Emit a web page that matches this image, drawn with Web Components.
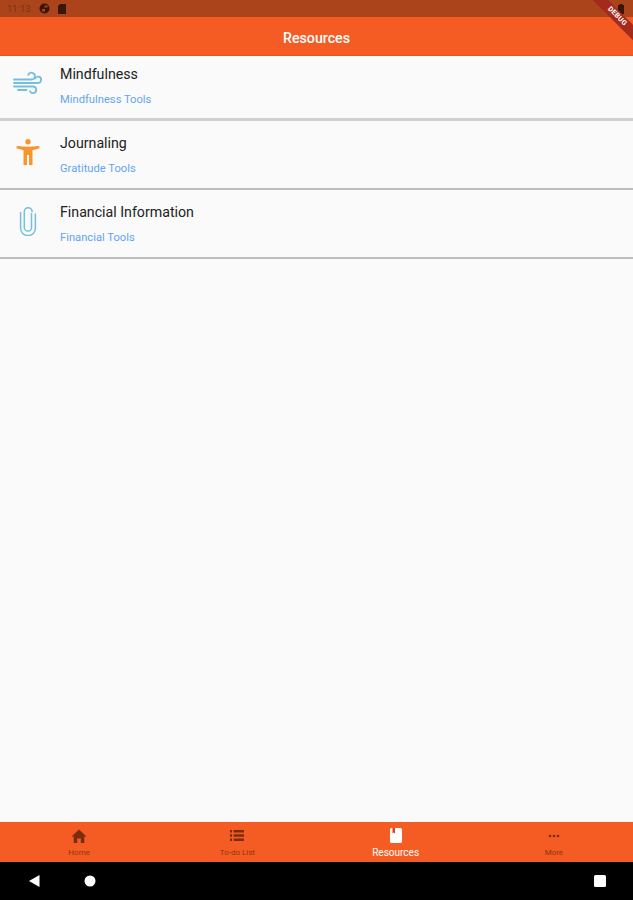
<!DOCTYPE html>
<html>
<head>
<meta charset="utf-8">
<title>Resources</title>
<style>
html, body { margin: 0; height: 100%; background: #fafafa; }
body { font-family: Roboto, "Liberation Sans", sans-serif; }
</style>
</head>
<body>
<app-shell>
	<status-bar slot="status"></status-bar>
	<app-bar slot="bar">Resources</app-bar>
	<resource-row icon="wind" title="Mindfulness" sub="Mindfulness Tools" line="3"></resource-row>
	<resource-row icon="person" title="Journaling" sub="Gratitude Tools" line="2"></resource-row>
	<resource-row icon="clip" title="Financial Information" sub="Financial Tools" line="2"></resource-row>
	<bottom-tabs slot="tabs"></bottom-tabs>
	<nav-keys slot="keys"></nav-keys>
</app-shell>

<script>
const icons = {
	wind: `<svg width="30" height="24" viewBox="0 0 30 24" fill="none" stroke="#74bfdc" stroke-width="1.8" stroke-linecap="round"><path d="M1 8.500h17.500a3.400 3.400 0 1 0-3.200-4.600"/><path d="M1 12h24a3.200 3.200 0 1 0-3-4.400"/><path d="M1 15.500h19a3.300 3.300 0 1 1-3 4.800"/><path d="M5 19h8.500"/></svg>`,
	person: `<svg width="26" height="28" viewBox="0 0 26 28" fill="#f7962d"><circle cx="13" cy="3.800" r="2.700"/><path d="M1.500 8.400 2.500 8.100Q13 9.400 23.500 8.100L24.500 8.400V10.200L17.500 12.200V27H14V17H12V27H8.500V12.200L1.500 10.200z"/></svg>`,
	clip: `<svg width="18" height="30" viewBox="0 0 18 30" fill="none" stroke="#74bfdc" stroke-width="1.500" stroke-linecap="round"><path d="M12.500 7.500v14a3.600 3.600 0 0 1-7.200 0V5.600a3.900 3.900 0 0 1 7.800 0"/><path d="M16.400 8v14.200a7.400 7.400 0 0 1-14.800 0V6.500"/></svg>`,
	home: `<svg width="16" height="14" viewBox="0 0 16 14" fill="#7a2c0d"><path d="M8 .5 15.500 7.400h-2.200V14H9.800V9.400H6.200V14H2.700V7.400H.5z"/></svg>`,
	list: `<svg width="14" height="11" viewBox="0 0 14 11" fill="#7a2c0d"><path d="M0 0h2v2.400H0zM3.600 0H14v2.400H3.600zM0 4.300h2v2.400H0zM3.600 4.300H14v2.400H3.600zM0 8.600h2V11H0zM3.600 8.600H14V11H3.600z"/></svg>`,
	book: `<svg width="12" height="15" viewBox="0 0 12 15"><path fill="#fff" d="M1.500 0h9A1.500 1.500 0 0 1 12 1.500v12a1.500 1.500 0 0 1-1.500 1.500h-9A1.500 1.500 0 0 1 0 13.500v-12A1.500 1.500 0 0 1 1.500 0z"/><path fill="#d8431f" d="M2.500 0h2.500v5.500l-1.250-1-1.250 1z"/></svg>`,
	more: `<svg width="12" height="4" viewBox="0 0 12 4" fill="#7a2c0d"><circle cx="2" cy="2" r="1.300"/><circle cx="6" cy="2" r="1.300"/><circle cx="10" cy="2" r="1.300"/></svg>`
};

class AppShell extends HTMLElement {
	constructor () {
		super();
		this.attachShadow({ mode: 'open' }).innerHTML = `<style>
			:host { display: flex; flex-direction: column; height: 900px; width: 633px; overflow: hidden; position: relative; }
			.list { flex: 1; display: block; background: #fafafa; margin-top: -4px; }
			.banner { position: absolute; top: 11px; right: -20px; width: 72px; height: 11px; background: #a52a1e; transform: rotate(45deg); color: #fff; font: 700 7px/11px Roboto, sans-serif; text-align: center; letter-spacing: .3px; z-index: 2; }
		</style>
		<slot name="status"></slot>
		<slot name="bar"></slot>
		<div class="list"><slot></slot></div>
		<slot name="tabs"></slot>
		<slot name="keys"></slot>
		<div class="banner">DEBUG</div>`;
	}
}

class StatusBar extends HTMLElement {
	constructor () {
		super();
		this.attachShadow({ mode: 'open' }).innerHTML = `<style>
			:host { display: flex; align-items: center; height: 17px; background: #ab441a; padding: 0 7px; box-sizing: border-box; color: #7a3312; font-size: 9.500px; }
			span { width: 32px; }
			svg { display: block; }
			.g { margin-right: 8px; }
			.right { margin-left: auto; display: flex; gap: 6px; align-items: center; margin-right: 2px; }
		</style>
		<span>11:13</span>
		<svg class="g" width="11" height="11" viewBox="0 0 11 11"><circle cx="5.500" cy="5.500" r="5" fill="#3a1607"/><path d="M5.500 2.500h3v2h-3zM3 6h3v2.500H3z" fill="#ab441a"/></svg>
		<svg width="8" height="10" viewBox="0 0 8 10"><path d="M2 0h6v10H0V2z" fill="#3a1607"/></svg>
		<div class="right">
			<svg width="9" height="8" viewBox="0 0 9 8"><path d="M0 1.500Q4.500-1 9 1.500L4.500 8z" fill="#3a1607"/></svg>
			<svg width="6" height="10" viewBox="0 0 6 10"><path d="M1.500 0h3v1H6v9H0V1h1.500z" fill="#3a1607"/></svg>
		</div>`;
	}
}

class AppBar extends HTMLElement {
	constructor () {
		super();
		this.attachShadow({ mode: 'open' }).innerHTML = `<style>
			:host { display: flex; align-items: center; justify-content: center; height: 39px; flex: none; background: #f45c24; color: #fff; font-size: 14.200px; font-weight: 500; box-shadow: inset 0 -1px #ee4f1c; position: relative; z-index: 1; padding-top: 2px; box-sizing: border-box; }
		</style><slot></slot>`;
	}
}

class ResourceRow extends HTMLElement {
	connectedCallback () {
		const line = this.getAttribute('line');
		this.attachShadow({ mode: 'open' }).innerHTML = `<style>
			:host { display: flex; height: 69px; box-sizing: border-box; border-bottom: ${line}px solid ${line === '3' ? '#cfcfcf' : '#bdbdbd'}; background: #fafafa; }
			.icon { width: 60px; height: 62px; display: flex; align-items: center; justify-content: center; padding-right: 4px; box-sizing: border-box; }
			.text { display: flex; flex-direction: column; padding-top: 14px; }
			.title { font-size: 14.200px; line-height: 16px; color: #212121; }
			.sub { font-size: 11.200px; line-height: 12px; color: #64a5ee; margin-top: 12px; }
		</style>
		<div class="icon">${icons[this.getAttribute('icon')]}</div>
		<div class="text">
			<div class="title">${this.getAttribute('title')}</div>
			<div class="sub">${this.getAttribute('sub')}</div>
		</div>`;
	}
}

class BottomTabs extends HTMLElement {
	constructor () {
		super();
		const tabs = [['home', 'Home'], ['list', 'To-do List'], ['book', 'Resources', true], ['more', 'More']];
		this.attachShadow({ mode: 'open' }).innerHTML = `<style>
			:host { display: grid; grid-template-columns: repeat(4, 1fr); height: 40px; flex: none; background: #f45c24; }
			div { display: flex; flex-direction: column; align-items: center; color: #8f3512; font-size: 8px; padding-top: 6px; box-sizing: border-box; }
			div.on { color: #fff; font-size: 10px; }
			i { height: 15px; display: flex; align-items: center; }
			span { margin-top: 5px; line-height: 10px; }
		</style>` + tabs.map(t => `<div class="${t[2] ? 'on' : ''}"><i>${icons[t[0]]}</i><span>${t[1]}</span></div>`).join('');
	}
}

class NavKeys extends HTMLElement {
	constructor () {
		super();
		this.attachShadow({ mode: 'open' }).innerHTML = `<style>
			:host { display: flex; height: 38px; flex: none; background: #000; align-items: center; padding: 0 27px 0 29px; box-sizing: border-box; }
			svg { display: block; }
			.c { margin-left: 44px; }
			.s { margin-left: auto; }
		</style>
		<svg width="11" height="12" viewBox="0 0 11 12"><path d="M10.500 0v12L0 6z" fill="#fff"/></svg>
		<svg class="c" width="12" height="12"><circle cx="6" cy="6" r="5.500" fill="#fff"/></svg>
		<svg class="s" width="12" height="12"><rect width="12" height="12" rx="1.500" fill="#fff"/></svg>`;
	}
}

customElements.define('app-shell', AppShell);
customElements.define('status-bar', StatusBar);
customElements.define('app-bar', AppBar);
customElements.define('resource-row', ResourceRow);
customElements.define('bottom-tabs', BottomTabs);
customElements.define('nav-keys', NavKeys);
</script>
</body>
</html>
